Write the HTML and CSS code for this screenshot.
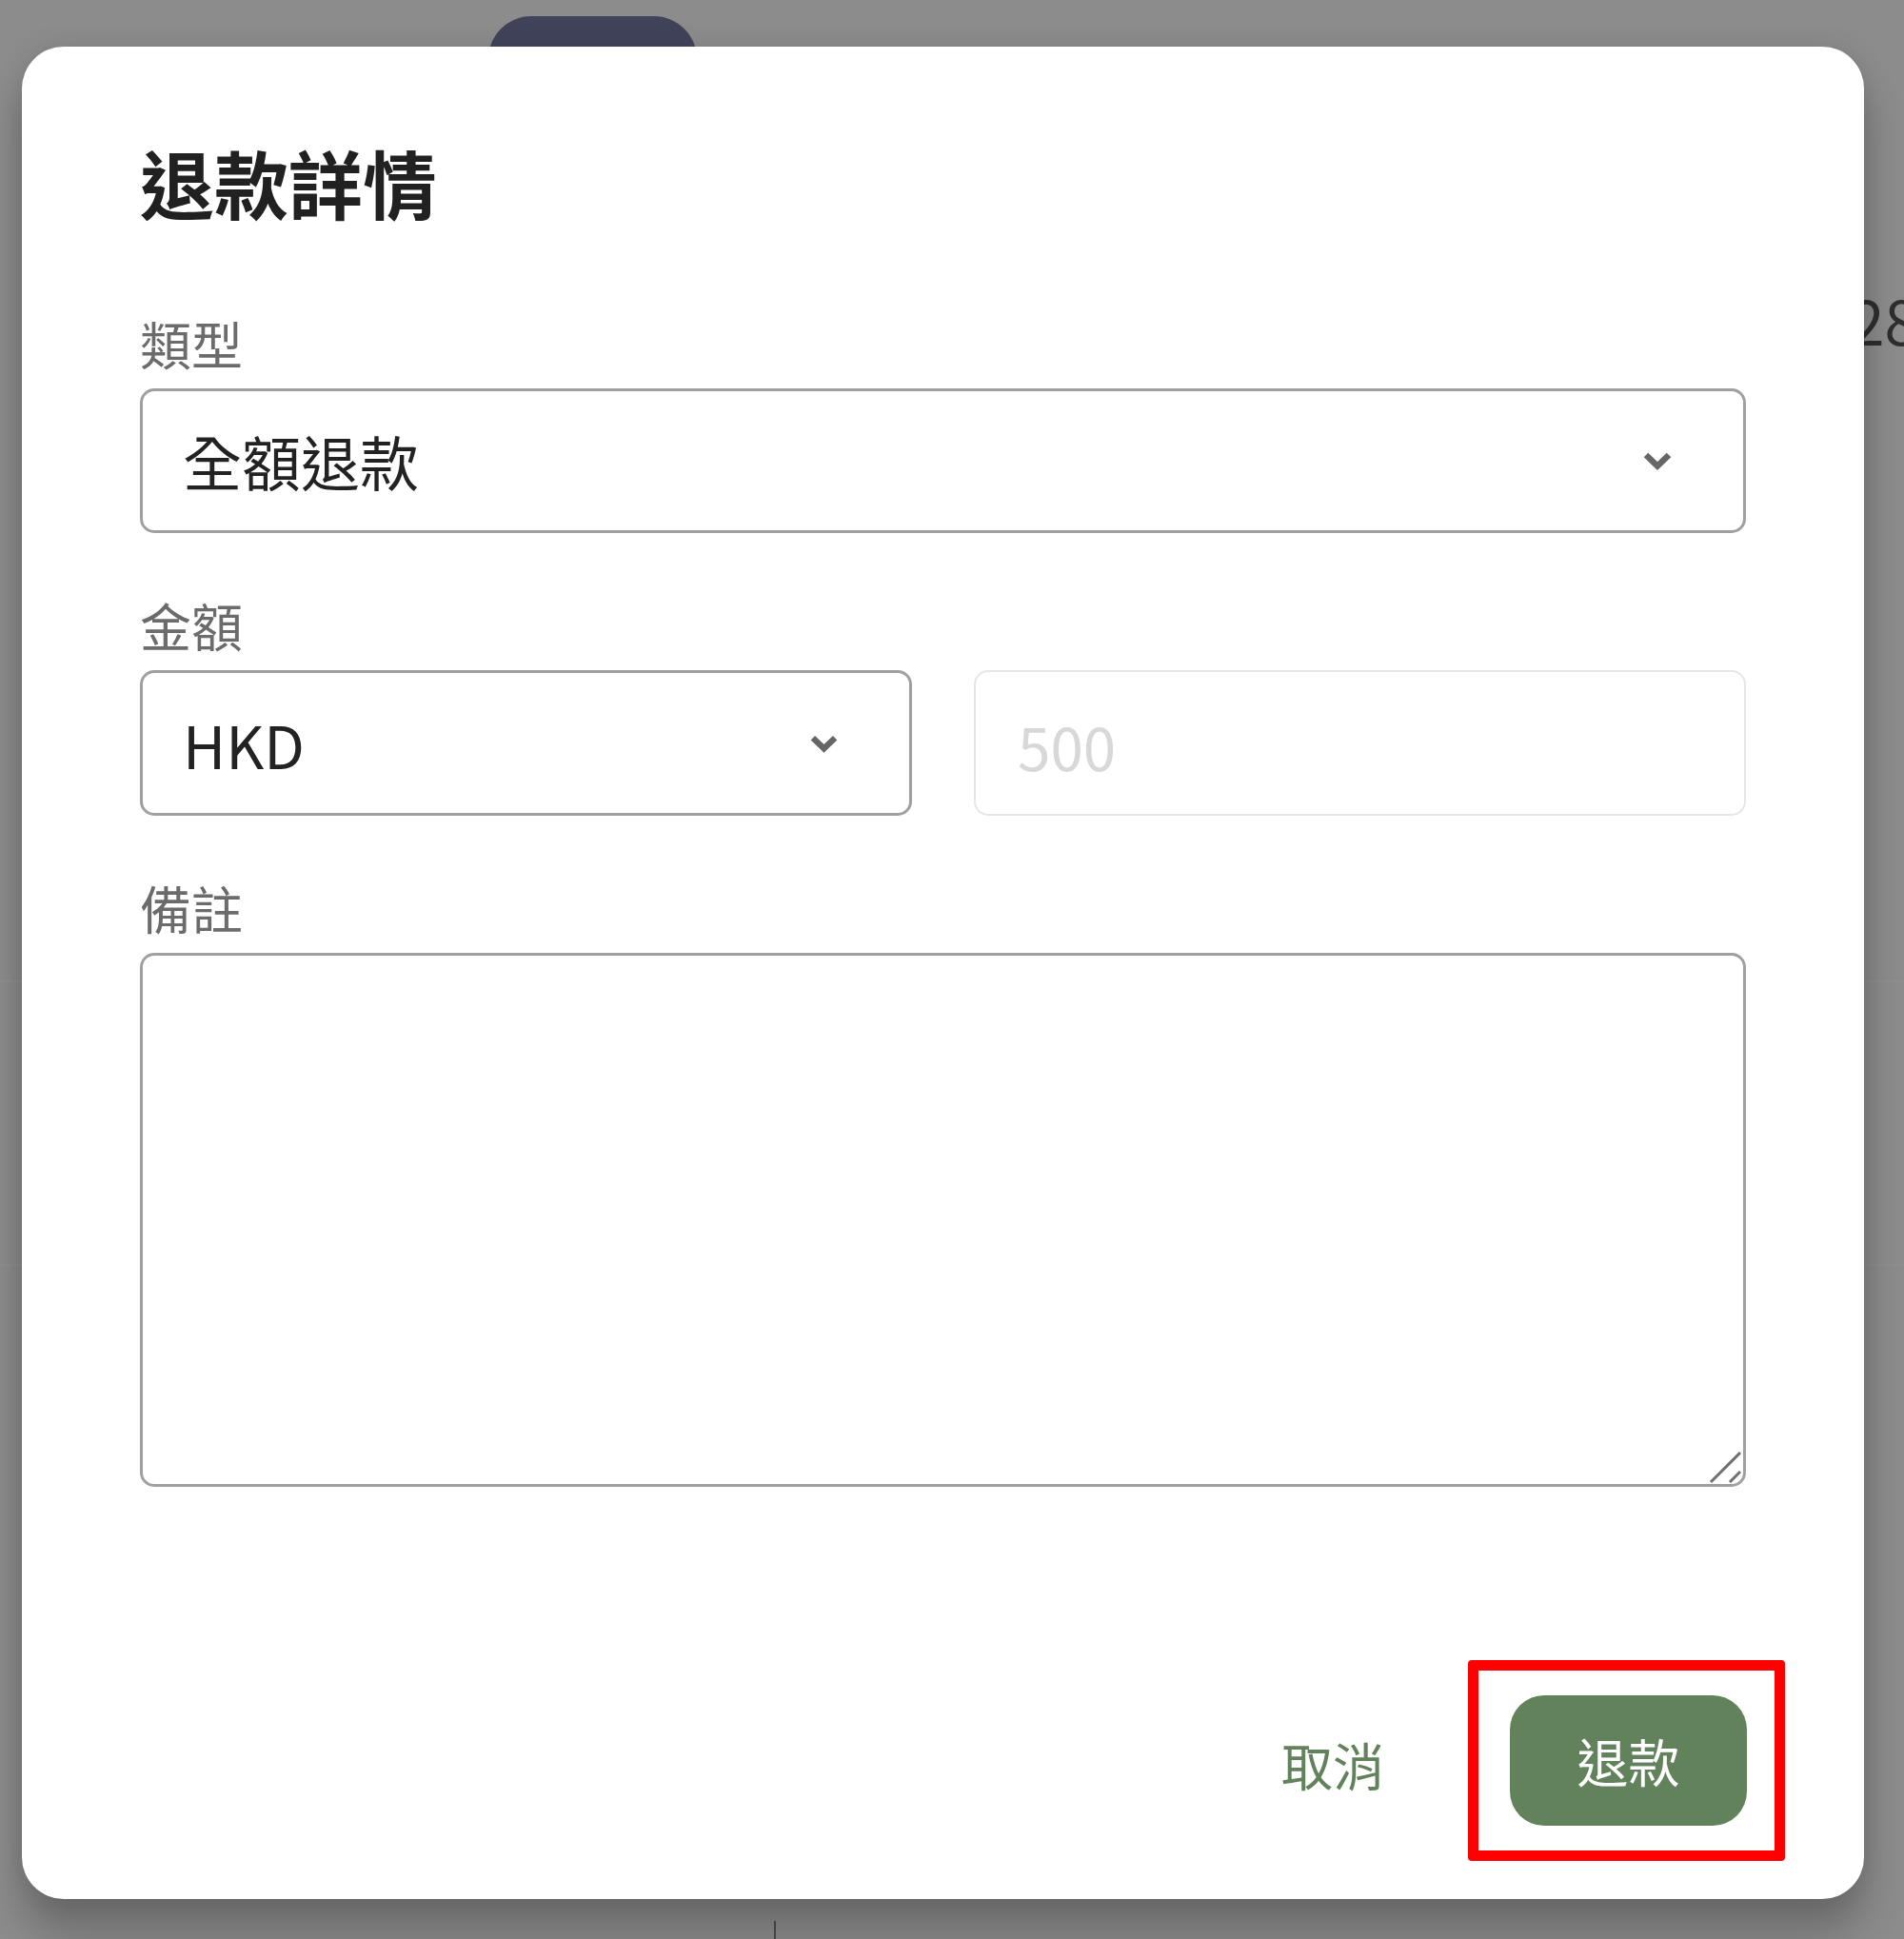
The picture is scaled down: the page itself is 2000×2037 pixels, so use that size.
FILE: index.html
```html
<!DOCTYPE html>
<html lang="zh-Hant">
<head>
    <meta charset="UTF-8">
    <meta name="viewport" content="width=device-width, initial-scale=1.0">
    <title>退款詳情</title>
    <link rel="stylesheet" href="styles.css">
</head>
<body>
    <!-- Page behind the dialog (dimmed) -->
    <div class="page">
        <header class="page-top">
            <span class="pill"></span>
        </header>
        <div class="page-amount">28</div>
        <ul class="page-rows">
            <li></li>
            <li></li>
        </ul>
        <div class="page-foot"><span class="tick"></span></div>
    </div>

    <!-- Refund dialog -->
    <div class="dialog">
        <h2 class="dialog-title">退款詳情</h2>

        <div class="field">
            <label class="field-label">類型</label>
            <div class="select">
                <span>全額退款</span>
                <svg class="chevron" viewBox="0 0 32 20" width="32" height="20"><path d="M4 4L16 15.5 28 4"/></svg>
            </div>
        </div>

        <div class="field">
            <label class="field-label">金額</label>
            <div class="field-row">
                <div class="select">
                    <span>HKD</span>
                    <svg class="chevron" viewBox="0 0 32 20" width="31" height="20"><path d="M4 4L16 15.5 28 4"/></svg>
                </div>
                <input type="text" class="input" placeholder="500">
            </div>
        </div>

        <div class="field">
            <label class="field-label">備註</label>
            <div class="textarea-wrap">
                <textarea class="textarea"></textarea>
                <svg class="grip" viewBox="0 0 40 40" width="40" height="40">
                    <path d="M3 35L34 4M23 35L34 24"/>
                </svg>
            </div>
        </div>

        <div class="actions">
            <button class="btn-text">取消</button>
            <span class="highlight">
                <button class="btn-primary">退款</button>
            </span>
        </div>
    </div>
</body>
</html>
```

FILE: styles.css
```css
html, body { margin: 0; padding: 0; }
body {
    font-family: "Noto Sans CJK TC", "Noto Sans", sans-serif;
    background-color: #8c8c8c;
    width: 2000px;
    height: 2037px;
    overflow: hidden;
}

/* Dimmed page behind */
.page { height: 2037px; display: flex; flex-direction: column; }
.page-top { padding: 17px 0 0 513px; height: 90px; }
.pill { display: block; width: 219px; height: 90px; border-radius: 45px; background-color: #40435a; }
.page-amount {
    margin-top: 188px;
    padding-left: 1944px;
    font-size: 64px;
    line-height: 80px;
    color: #2e2e2e;
    white-space: nowrap;
}
.page-rows { list-style: none; margin: 655px 0 0; padding: 0; }
.page-rows li { height: 296px; border-top: 2px solid #8f8f8f; }
.page-foot { margin-top: auto; padding-left: 813px; height: 19px; }
.tick { display: block; width: 2px; height: 19px; background-color: #4e4e4e; }

/* Dialog */
.dialog {
    position: fixed;
    left: 23px;
    top: 49px;
    width: 1935px;
    height: 1946px;
    box-sizing: border-box;
    padding: 103px 124px 77px;
    background-color: #fff;
    border-radius: 44px;
    box-shadow: 0 34px 44px rgba(0,0,0,0.24), 0 0 30px rgba(0,0,0,0.1);
    display: flex;
    flex-direction: column;
}

.dialog-title {
    margin: 0;
    font-size: 78px;
    line-height: 78px;
    font-weight: 700;
    color: #212121;
}

.field { margin-top: 70px; }
.dialog-title + .field { margin-top: 104px; }
.field:last-of-type { margin-top: 68px; }

.field-label {
    display: block;
    font-size: 54px;
    line-height: 54px;
    color: #6b6b6b;
    margin-bottom: 20px;
}

.field-row { display: grid; grid-template-columns: 1fr 1fr; gap: 65px; }

.select {
    height: 152px;
    box-sizing: border-box;
    border: 3px solid #a0a0a0;
    border-radius: 15px;
    padding: 0 74px 0 42px;
    display: flex;
    align-items: center;
    justify-content: space-between;
    font-size: 62px;
    color: #222;
}
.field-row .select { height: 153px; }
.chevron { fill: none; stroke: #666; stroke-width: 6.5; }

.input {
    height: 153px;
    box-sizing: border-box;
    border: 2px solid #e6e6e6;
    border-radius: 15px;
    padding: 4px 0 0 44px;
    font-family: inherit;
    font-size: 62px;
    color: #222;
    outline: none;
    width: 100%;
}
.input::placeholder { color: #d8d8d8; }

.textarea-wrap { position: relative; height: 561px; }
.textarea {
    display: block;
    width: 100%;
    height: 100%;
    box-sizing: border-box;
    border: 3px solid #a0a0a0;
    border-radius: 15px;
    resize: none;
    outline: none;
    font-family: inherit;
    font-size: 54px;
}
.grip { position: absolute; right: 0; bottom: 0; stroke: #707070; stroke-width: 3; fill: none; }

.actions {
    margin-top: auto;
    display: flex;
    justify-content: flex-end;
    align-items: center;
    gap: 88px;
}

.btn-text {
    border: none;
    background: none;
    padding: 0;
    font-family: inherit;
    font-size: 54px;
    line-height: 54px;
    color: #62825c;
    margin-top: 8px;
}

/* red annotation box around the refund button */
.highlight {
    display: block;
    border: 11px solid #ff0000;
    border-radius: 4px;
    padding: 26px 29px 26px 33px;
    margin: -37px -41px -37px 0;
}

.btn-primary {
    display: block;
    width: 249px;
    height: 137px;
    border: none;
    border-radius: 36px;
    background-color: #62825c;
    color: #fff;
    font-family: inherit;
    font-size: 54px;
    padding: 0;
}
```
